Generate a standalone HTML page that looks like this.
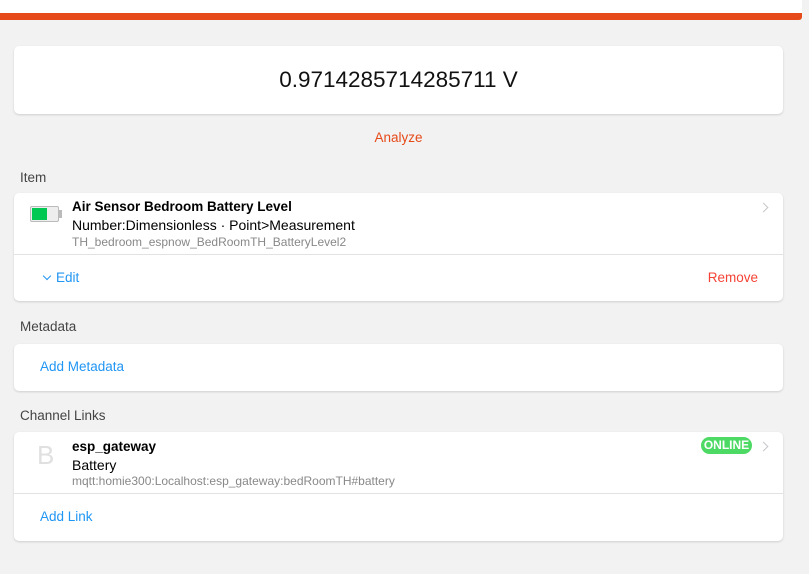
<!DOCTYPE html>
<html><head><meta charset="utf-8">
<style>
*{box-sizing:border-box;margin:0;padding:0}
body{width:809px;height:574px;background:#f2f2f2;font-family:"Liberation Sans","DejaVu Sans",sans-serif;position:relative;overflow:hidden;color:#000}
.top{position:absolute;left:0;top:0;width:802px;height:20px;background:#fff;border-bottom:7px solid #e64a19;border-bottom-right-radius:3px}
.card{position:absolute;left:14px;width:769px;background:#fff;border-radius:5px;box-shadow:0 1px 2px rgba(0,0,0,.15)}
.lbl{position:absolute;left:20px;font-size:13.5px;color:#444}
.div{position:absolute;left:0;right:0;height:1px;background:#e2e2e2}
.blue{color:#2196f3}
.a{position:absolute;white-space:nowrap}
.chev{position:absolute;right:16px;width:7px;height:7px;border-right:1.5px solid #c7c7cc;border-top:1.5px solid #c7c7cc;transform:rotate(45deg)}
</style></head><body>
<div class="top"></div>
<div class="card" style="top:46px;height:68px">
  <div class="a" style="left:0;right:0;top:21px;text-align:center;font-size:22.5px;color:#111">0.9714285714285711 V</div>
</div>
<div class="a" style="left:0;width:797px;top:130px;text-align:center;font-size:13.5px;color:#e64a19">Analyze</div>

<div class="lbl" style="top:170px">Item</div>
<div class="card" style="top:193px;height:108px">
  <div class="a" style="left:16px;top:13px;width:29px;height:16px;border:1px solid #bbb;border-radius:2px;background:#eee"><div style="position:absolute;left:1px;top:1px;width:15px;height:12px;background:#00c853"></div></div>
  <div class="a" style="left:45px;top:17px;width:3px;height:8px;background:#bbb"></div>
  <div class="a" style="left:58px;top:6px;font-size:13.5px;font-weight:bold">Air Sensor Bedroom Battery Level</div>
  <div class="a" style="left:58px;top:24px;font-size:14px">Number:Dimensionless · Point&gt;Measurement</div>
  <div class="a" style="left:58px;top:42px;font-size:12px;color:#888">TH_bedroom_espnow_BedRoomTH_BatteryLevel2</div>
  <div class="chev" style="top:11px"></div>
  <div class="div" style="top:61px"></div>
  <div class="a blue" style="left:30px;top:77px;font-size:13.5px"><span style="display:inline-block;width:6px;height:6px;border-right:1.5px solid #2196f3;border-bottom:1.5px solid #2196f3;transform:rotate(45deg);margin-right:6px;position:relative;top:-3px"></span>Edit</div>
  <div class="a" style="right:25px;top:77px;font-size:13.5px;color:#f44336">Remove</div>
</div>

<div class="lbl" style="top:319px">Metadata</div>
<div class="card" style="top:344px;height:47px">
  <div class="a blue" style="left:26px;top:15px;font-size:13.5px">Add Metadata</div>
</div>

<div class="lbl" style="top:408px">Channel Links</div>
<div class="card" style="top:432px;height:109px">
  <div class="a" style="left:23px;top:8px;font-size:26px;color:#e0e0e0;font-weight:300">B</div>
  <div class="a" style="left:58px;top:7px;font-size:13.5px;font-weight:bold">esp_gateway</div>
  <div class="a" style="left:58px;top:25px;font-size:14px">Battery</div>
  <div class="a" style="left:58px;top:42px;font-size:12px;color:#888">mqtt:homie300:Localhost:esp_gateway:bedRoomTH#battery</div>
  <div class="a" style="left:687px;top:5px;height:17px;width:51px;border-radius:9px;background:#4cd964;color:#fff;font-size:12px;font-weight:bold;line-height:17px;text-align:center">ONLINE</div>
  <div class="chev" style="top:11px"></div>
  <div class="div" style="top:61px"></div>
  <div class="a blue" style="left:26px;top:77px;font-size:13.5px">Add Link</div>
</div>
</body></html>
